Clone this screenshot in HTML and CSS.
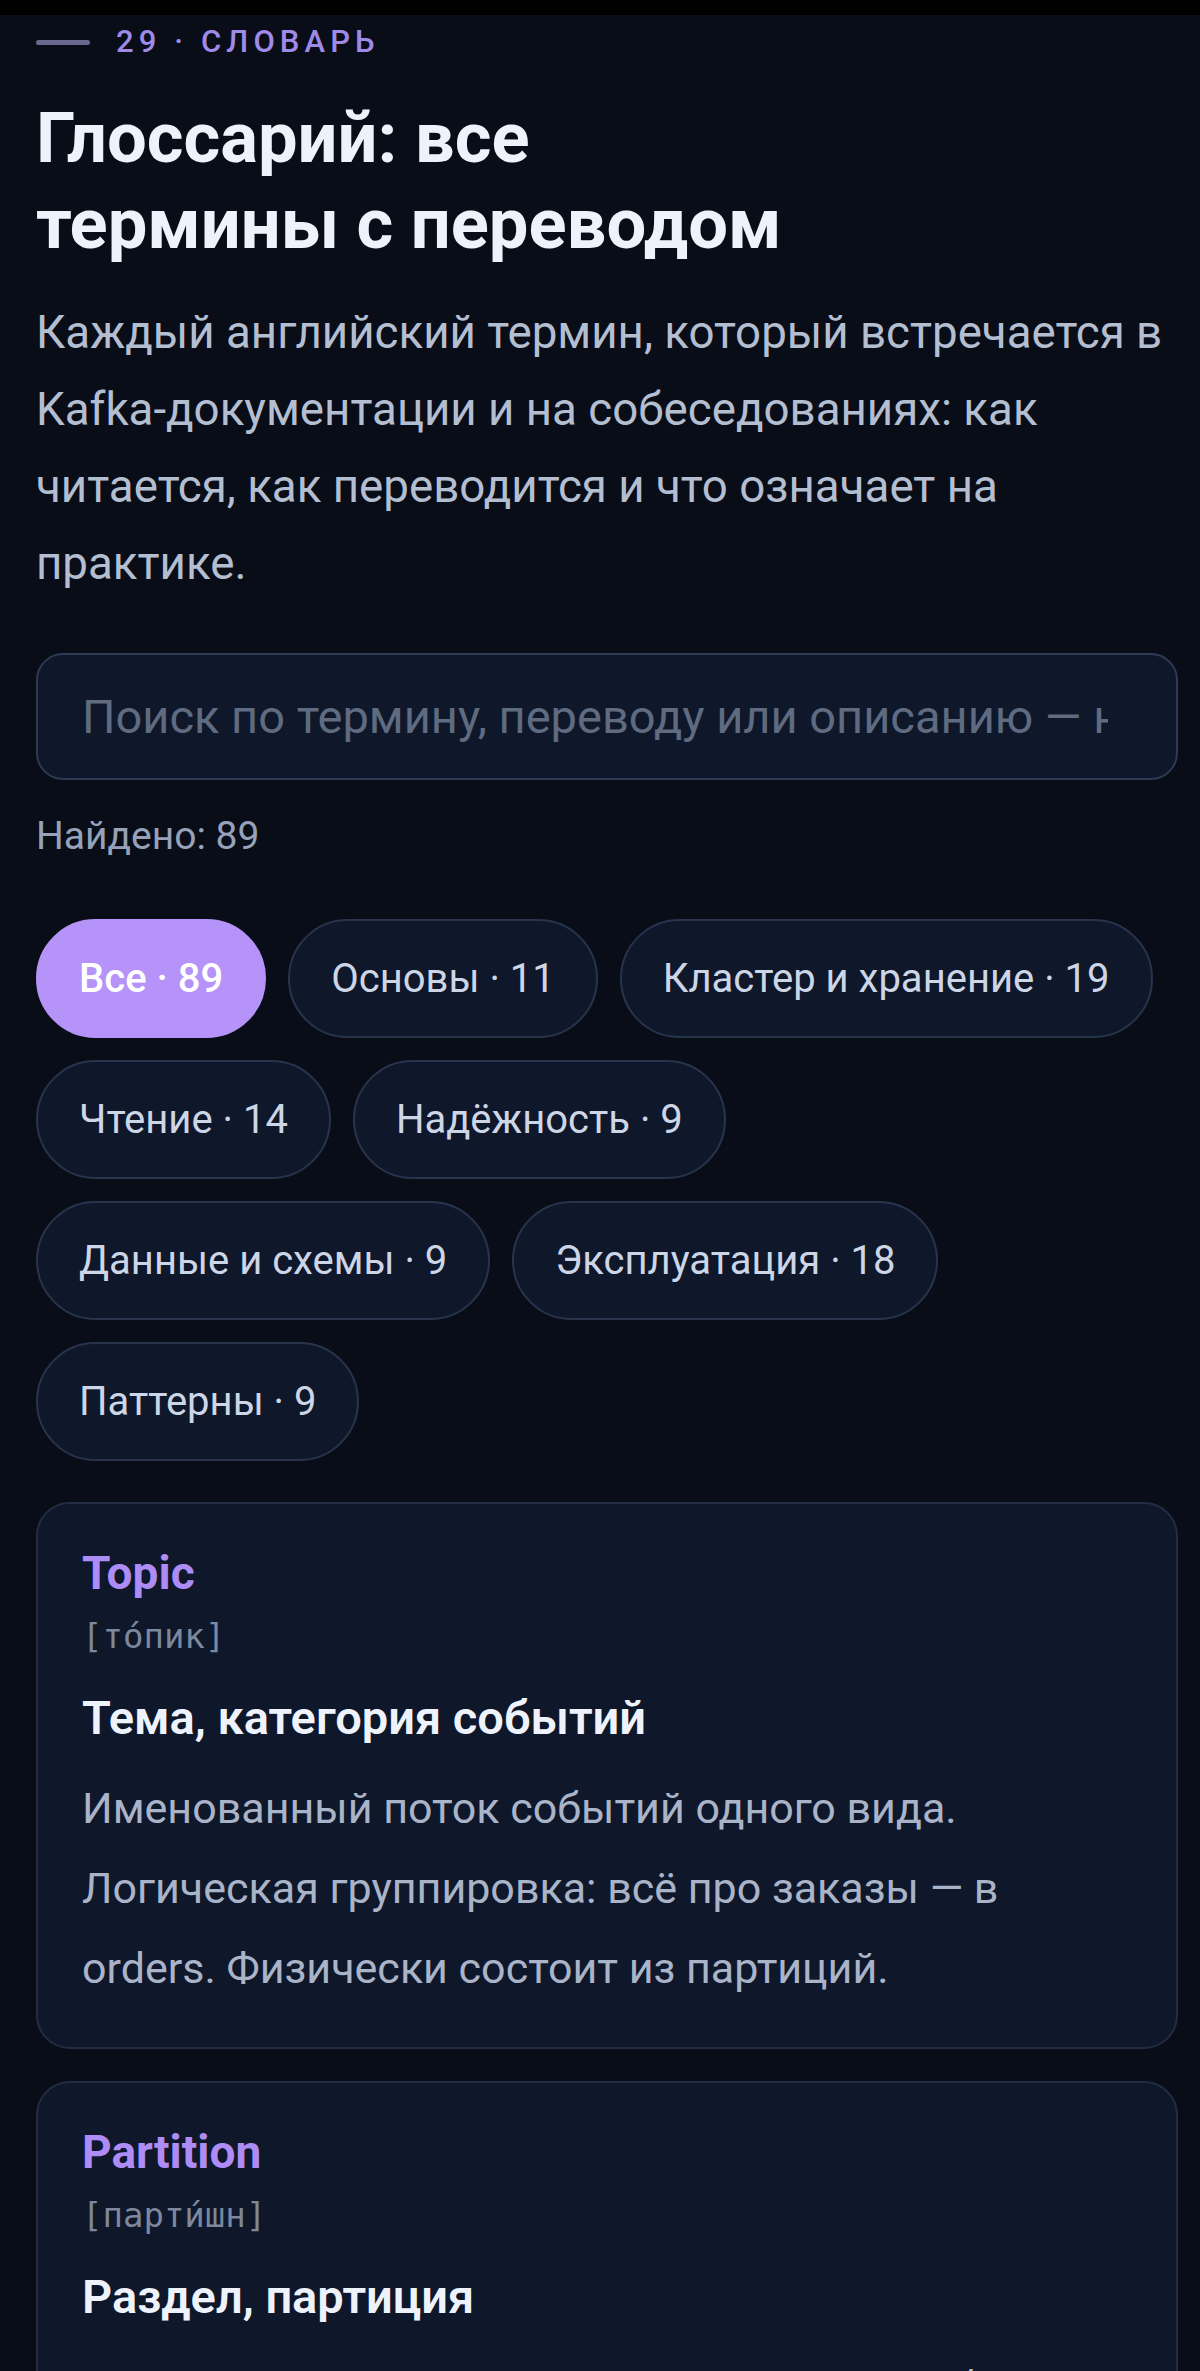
FILE: index.html
```html
<!DOCTYPE html>
<html lang="ru">
<head>
<meta charset="utf-8">
<title>Глоссарий</title>
<link rel="stylesheet" href="styles.css">
</head>
<body>
<div class="statusbar"></div>
<main class="page">
  <div class="eyebrow"><span class="eyebrow-line"></span><span class="eyebrow-text">29 · СЛОВАРЬ</span></div>
  <h1 class="title">Глоссарий: все<br>термины с переводом</h1>
  <p class="lead">Каждый английский термин, который встречается в Kafka-документации и на собеседованиях: как читается, как переводится и что означает на практике.</p>
  <input class="search" type="text" placeholder="Поиск по термину, переводу или описанию — например, offset">
  <div class="found">Найдено: 89</div>
  <div class="chips">
    <button class="chip chip-active">Все · 89</button>
    <button class="chip">Основы · 11</button>
    <button class="chip">Кластер и хранение · 19</button>
    <button class="chip">Чтение · 14</button>
    <button class="chip">Надёжность · 9</button>
    <button class="chip">Данные и схемы · 9</button>
    <button class="chip">Эксплуатация · 18</button>
    <button class="chip">Паттерны · 9</button>
  </div>
  <div class="cards">
    <article class="card">
      <div class="term">Topic</div>
      <div class="pron">[то́пик]</div>
      <div class="meaning">Тема, категория событий</div>
      <p class="desc">Именованный поток событий одного вида. Логическая группировка: всё про заказы — в orders. Физически состоит из партиций.</p>
    </article>
    <article class="card">
      <div class="term">Partition</div>
      <div class="pron">[парти́шн]</div>
      <div class="meaning">Раздел, партиция</div>
      <p class="desc">Упорядоченный журнал внутри топика: любой ключ всегда попадает в одну и ту же партицию, порядок гарантирован только внутри неё.</p>
    </article>
  </div>
</main>
</body>
</html>
```
FILE: styles.css
```css
* { box-sizing: border-box; }
html, body { margin: 0; padding: 0; }
body {
  background: #090d17;
  font-family: Roboto, "Noto Sans", "DejaVu Sans", sans-serif;
  color: #e9eef8;
  overflow: hidden;
}
.statusbar { height: 15px; background: #000; }
.page { padding: 0 22px 0 36px; }

.eyebrow {
  margin-top: 7px;
  height: 40px;
  display: flex;
  align-items: center;
  gap: 26px;
}
.eyebrow-line {
  width: 54px;
  height: 5px;
  border-radius: 3px;
  background: #6a6790;
}
.eyebrow-text {
  font-size: 31px;
  line-height: 40px;
  font-weight: 500;
  letter-spacing: 0.165em;
  color: #a08ae8;
}

.title {
  margin: 33px 0 0;
  font-size: 70.5px;
  line-height: 86px;
  font-weight: 700;
  color: #eef2fb;
}

.lead {
  margin: 27px 0 0;
  font-size: 45.7px;
  line-height: 77px;
  color: #b4bed1;
}

.search {
  display: block;
  width: 100%;
  height: 127px;
  margin-top: 51px;
  padding: 0 68px 0 44px;
  border: 2px solid #2c3a54;
  border-radius: 27px;
  background: #0f182b;
  font-family: Roboto, "Noto Sans", sans-serif;
  font-size: 47px;
  color: #e9eef8;
  outline: none;
}
.search::placeholder { color: #5f6b80; }

.found {
  margin-top: 30px;
  font-size: 39px;
  line-height: 53px;
  color: #96a2b9;
}

.chips {
  margin-top: 56px;
  display: flex;
  flex-wrap: wrap;
  gap: 22px;
}
.chip {
  height: 119px;
  padding: 0 41px;
  border: 2px solid #27344c;
  border-radius: 60px;
  background: #0f182b;
  font-family: Roboto, "Noto Sans", sans-serif;
  font-size: 40px;
  color: #cdd6e6;
  display: flex;
  align-items: center;
}
.chip-active {
  background: #b693f8;
  border-color: #b693f8;
  color: #ffffff;
  font-weight: 500;
}

.cards {
  margin-top: 41px;
  display: flex;
  flex-direction: column;
  gap: 32px;
}
.card {
  border: 2px solid #222d43;
  border-radius: 34px;
  background: #0f172a;
  padding: 41px 46px 39px 44px;
}
.term {
  font-size: 46px;
  line-height: 56px;
  font-weight: 700;
  color: #ae8cf6;
}
.pron {
  margin-top: 13px;
  font-family: "DejaVu Sans Mono", "Liberation Mono", monospace;
  font-size: 34px;
  line-height: 44px;
  color: #7d889d;
}
.meaning {
  margin-top: 31px;
  font-size: 47px;
  line-height: 58px;
  font-weight: 600;
  color: #eef2fb;
}
.desc {
  margin: 21px 0 0;
  font-size: 43px;
  line-height: 80px;
  color: #aab4c8;
}
```
